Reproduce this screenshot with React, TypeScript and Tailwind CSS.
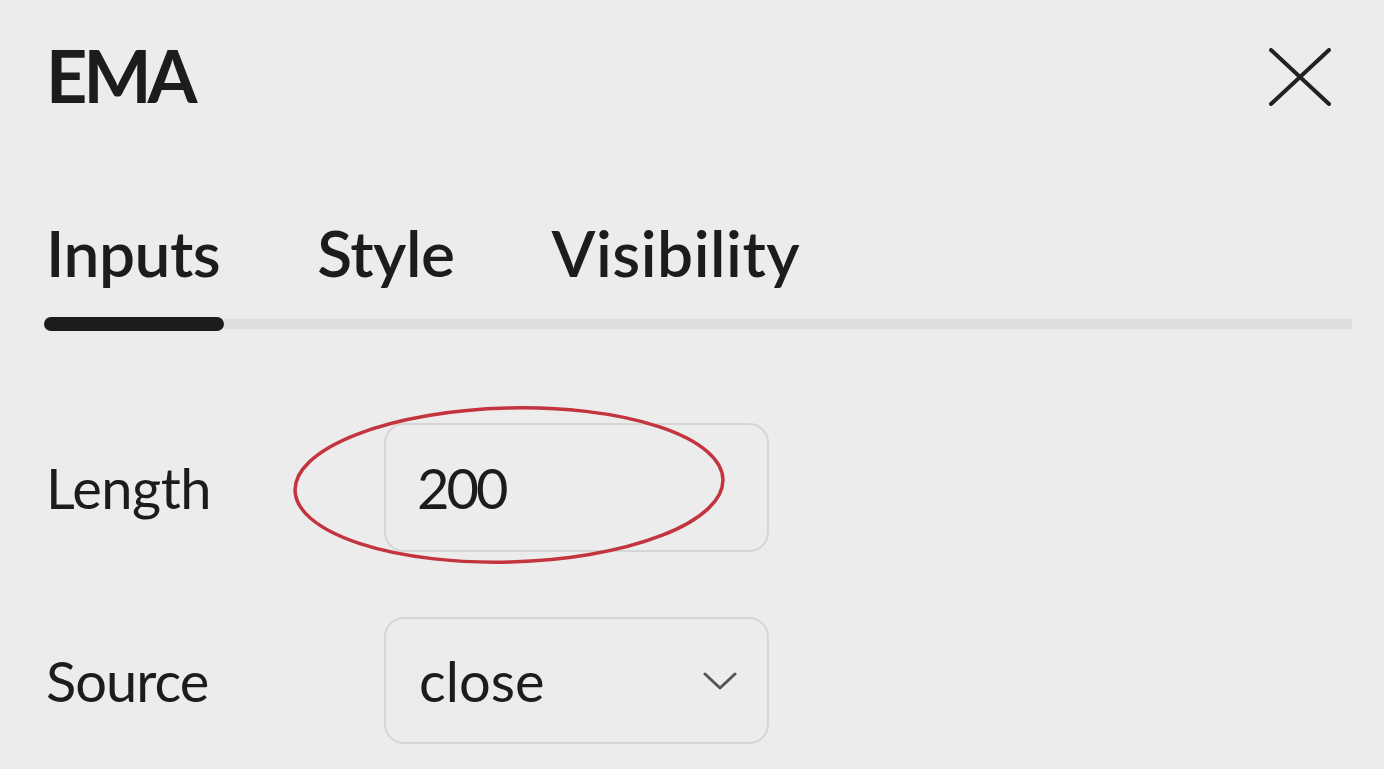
import { useState } from 'react';

const tabs = ['Inputs', 'Style', 'Visibility'];

function Chevron() {
  return (
    <svg width="34" height="20" viewBox="0 0 34 20" fill="none" stroke="#555" strokeWidth={3} strokeLinecap="round" strokeLinejoin="round">
      <path d="M2 3l15 14L32 3" />
    </svg>
  );
}

function CloseIcon() {
  return (
    <svg width="62" height="58" viewBox="0 0 62 58" fill="none" stroke="#222" strokeWidth={4} strokeLinecap="round">
      <path d="M2 2l58 54M60 2L2 56" />
    </svg>
  );
}

export default function App() {
  const [active, setActive] = useState('Inputs');

  return (
    <div className="relative w-[1384px] h-[769px] overflow-hidden bg-[#ececec] text-[#1c1c1c] font-['Lato','Open_Sans',sans-serif]">
      {/* Header */}
      <div className="flex items-start justify-between pl-[46px] pr-[53px] pt-[39px]">
        <h1 className="text-[72px] font-bold leading-none tracking-[-4px]">EMA</h1>
        <button className="mt-[9px]" aria-label="Close">
          <CloseIcon />
        </button>
      </div>

      {/* Tabs */}
      <div className="mt-[110px] pl-[46px]">
        <div className="flex gap-[97px]">
          {tabs.map(t => (
            <button
              key={t}
              onClick={() => setActive(t)}
              className="text-[64px] font-semibold leading-none tracking-[-0.5px] last:tracking-[0.5px]"
            >
              {t}
            </button>
          ))}
        </div>
        <div className="mt-[32px] flex items-center pr-[32px]">
          <div className="h-[14px] w-[180px] -ml-[2px] rounded-full bg-[#1c1c1c]" />
          <div className="h-[10px] flex-1 bg-[#dedede]" />
        </div>
      </div>

      {/* Inputs */}
      <div className="mt-[92px] flex flex-col gap-[65px] pl-[46px]">
        <div className="flex items-center">
          <label className="w-[338px] text-[56px] leading-none tracking-[-0.5px]">Length</label>
          <div className="flex h-[129px] w-[385px] items-center rounded-[20px] border-2 border-[#d6d6d6] pl-[31px] text-[56px] leading-none tracking-[-3px]">
            200
          </div>
        </div>
        <div className="flex items-center">
          <label className="w-[338px] text-[56px] leading-none tracking-[-1px]">Source</label>
          <div className="flex h-[127px] w-[385px] items-center justify-between rounded-[20px] border-2 border-[#d6d6d6] pl-[33px] pr-[30px] text-[56px] leading-none">
            <span>close</span>
            <Chevron />
          </div>
        </div>
      </div>

      {/* annotation */}
      <svg className="pointer-events-none absolute left-[290px] top-[400px]" width="440" height="166" viewBox="0 0 440 166" fill="none">
        <ellipse cx="219" cy="85" rx="214" ry="77" stroke="#c4343f" strokeWidth={3.5} transform="rotate(-1.5 219 85)" />
      </svg>
    </div>
  );
}
